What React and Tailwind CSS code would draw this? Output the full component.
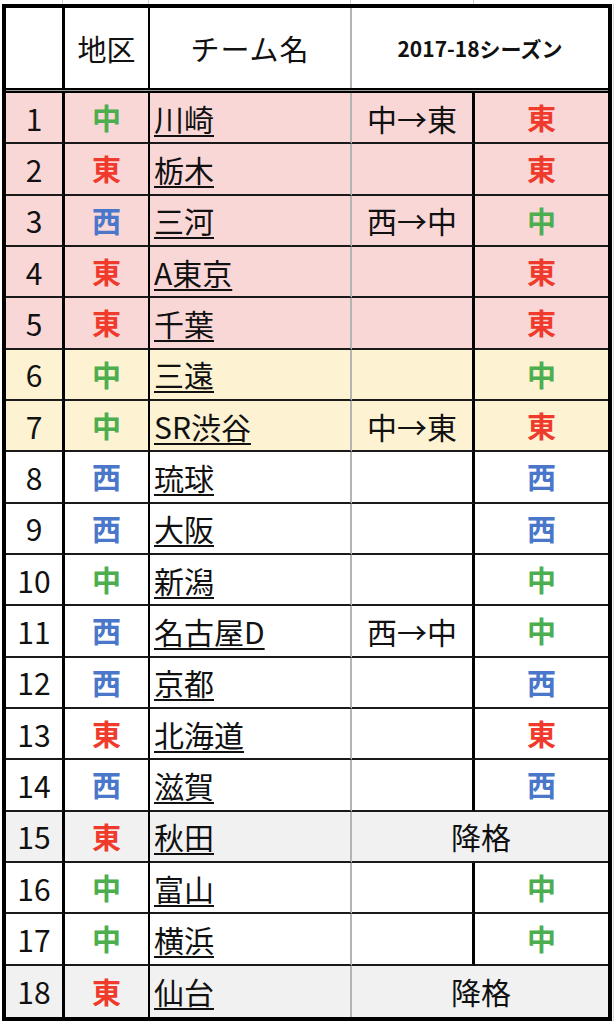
import React from 'react'

const rows = [
    { no: 1, area: '中', team: '川崎', move: '中→東', next: '東', bg: 'pink' },
    { no: 2, area: '東', team: '栃木', move: '', next: '東', bg: 'pink' },
    { no: 3, area: '西', team: '三河', move: '西→中', next: '中', bg: 'pink' },
    { no: 4, area: '東', team: 'A東京', move: '', next: '東', bg: 'pink' },
    { no: 5, area: '東', team: '千葉', move: '', next: '東', bg: 'pink' },
    { no: 6, area: '中', team: '三遠', move: '', next: '中', bg: 'yellow' },
    { no: 7, area: '中', team: 'SR渋谷', move: '中→東', next: '東', bg: 'yellow' },
    { no: 8, area: '西', team: '琉球', move: '', next: '西' },
    { no: 9, area: '西', team: '大阪', move: '', next: '西' },
    { no: 10, area: '中', team: '新潟', move: '', next: '中' },
    { no: 11, area: '西', team: '名古屋D', move: '西→中', next: '中' },
    { no: 12, area: '西', team: '京都', move: '', next: '西' },
    { no: 13, area: '東', team: '北海道', move: '', next: '東' },
    { no: 14, area: '西', team: '滋賀', move: '', next: '西' },
    { no: 15, area: '東', team: '秋田', relegated: true, bg: 'gray' },
    { no: 16, area: '中', team: '富山', move: '', next: '中' },
    { no: 17, area: '中', team: '横浜', move: '', next: '中' },
    { no: 18, area: '東', team: '仙台', relegated: true, bg: 'gray' },
]

const areaColor = {
    '東': 'text-[#ef3a2c]',
    '中': 'text-[#4cae4f]',
    '西': 'text-[#4a77c9]',
}

const bgColor = {
    pink: 'bg-[#f9d7d7]',
    yellow: 'bg-[#fdf2d1]',
    gray: 'bg-[#f1f1f1]',
}

function Row({ r, last }) {
    const bg = bgColor[r.bg] || 'bg-white'
    const line = last ? '' : 'border-b-2 border-b-[#1a1a1a]'
    const cell = `flex items-center ${bg} ${line}`

    return (
        <>
            <div className={`${cell} justify-center border-r-[3px] border-r-black text-[30px]`}>{r.no}</div>
            <div className={`${cell} justify-center border-r-2 border-r-black font-bold text-[29px] ${areaColor[r.area]}`}>{r.area}</div>
            <div className={`${cell} pl-[4px] border-r-2 border-r-[#b4b4b4]`}>
                <span className="underline decoration-[1.5px] underline-offset-[4px]">{r.team}</span>
            </div>
            {r.relegated ? (
                <div className={`${cell} col-span-2 justify-center pl-[2px]`}>降格</div>
            ) : (
                <>
                    <div className={`${cell} justify-center border-r-[3px] border-r-black`}>{r.move}</div>
                    <div className={`${cell} justify-center font-bold text-[29px] ${areaColor[r.next]}`}>{r.next}</div>
                </>
            )}
        </>
    )
}

export default function App() {
    return (
        <div className="w-[616px] h-[1024px] bg-white overflow-hidden text-[#111] font-['Noto_Sans_CJK_JP','Noto_Sans',sans-serif]">
            {/* grid lines above the sheet */}
            <div className="flex h-[4px]">
                <div className="w-[63px] border-r border-r-[#d0d0d0]" />
                <div className="w-[86px] border-r border-r-[#d0d0d0]" />
                <div className="w-[202px] border-r border-r-[#d0d0d0]" />
                <div className="w-[123px] border-r border-r-[#d0d0d0]" />
            </div>

            <div className="flex">
                <div className="ml-[2px] w-[610px] border-[4px] border-black">
                    <div className="grid grid-cols-[59px_85px_202px_123px_133px] grid-rows-[80px_5px_repeat(18,minmax(0,1fr))] h-[1009px] text-[30px] leading-none">
                        <div className="border-r-[3px] border-r-black" />
                        <div className="flex items-center justify-center border-r-2 border-r-black text-[29px]">地区</div>
                        <div className="flex items-center justify-center border-r-2 border-r-[#b4b4b4] text-[29px] tracking-[1px]">チーム名</div>
                        <div className="col-span-2 flex items-center justify-center text-[21px] font-bold">2017-18シーズン</div>

                        <div className="col-span-5 border-y-2 border-black bg-[#9a9a9a]" />

                        {rows.map((r, i) => (
                            <Row key={r.no} r={r} last={i === rows.length - 1} />
                        ))}
                    </div>
                </div>
                <div className="ml-[1px] w-px bg-[#d8d8d8]" />
            </div>
        </div>
    )
}
